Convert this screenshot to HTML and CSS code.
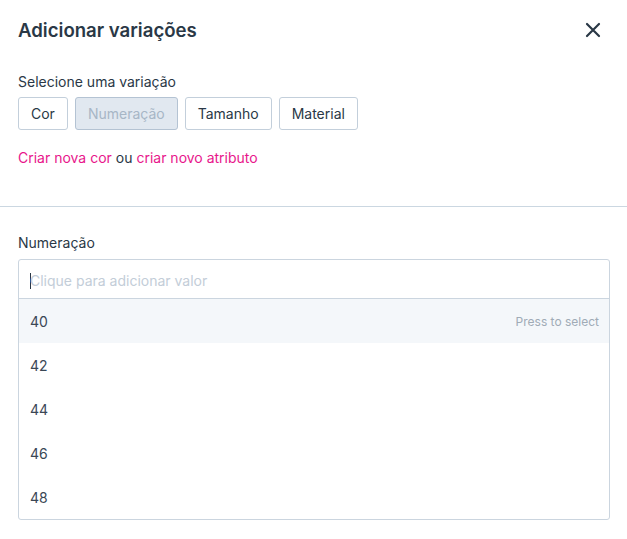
FILE: index.html
```html
<!DOCTYPE html>
<html lang="pt-BR">
<head>
  <meta charset="UTF-8">
  <meta name="viewport" content="width=device-width, initial-scale=1.0">
  <title>Adicionar variações</title>
  <link rel="stylesheet" href="styles.css">
</head>
<body>

  <div class="modal">
    <div class="modal-header">
      <h1>Adicionar variações</h1>
      <button class="close-btn" aria-label="Fechar">
        <svg width="16" height="16" viewBox="0 0 16 16">
          <path d="M2 2 L14 14 M14 2 L2 14" stroke="#2a3846" stroke-width="2.2" stroke-linecap="round"/>
        </svg>
      </button>
    </div>

    <div class="section">
      <p class="label">Selecione uma variação</p>
      <div class="chips">
        <button class="chip">Cor</button>
        <button class="chip chip-active">Numeração</button>
        <button class="chip">Tamanho</button>
        <button class="chip">Material</button>
      </div>
      <p class="links"><a href="#">Criar nova cor</a> ou <a href="#">criar novo atributo</a></p>
    </div>

    <hr class="divider">

    <div class="section">
      <p class="label">Numeração</p>
      <div class="select-box">
        <div class="select-input"><span class="caret"></span>Clique para adicionar valor</div>
        <ul class="options">
          <li class="option option-hover">40 <span class="hint">Press to select</span></li>
          <li class="option">42</li>
          <li class="option">44</li>
          <li class="option">46</li>
          <li class="option">48</li>
        </ul>
      </div>
    </div>
  </div>

</body>
</html>
```

FILE: styles.css
```css
body {
  margin: 0;
  background: white;
  color: #2a3846;
  font-family: Inter, "Noto Sans", sans-serif;
  font-size: 14px;
}

.modal {
  width: 627px;
}

.modal-header {
  display: flex;
  justify-content: space-between;
  align-items: center;
  padding: 18px 18px 0 18px;
  height: 24px;
}

h1 {
  margin: 0;
  font-size: 18.6px;
  font-weight: 600;
  line-height: 24px;
  color: #2a3846;
}

.close-btn {
  background: none;
  border: none;
  padding: 0;
  margin-right: 8px;
  display: flex;
  cursor: pointer;
}

.section {
  padding: 0 18px;
}

.label {
  margin: 0;
  line-height: 20px;
  color: #2a3846;
}

.modal-header + .section {
  padding-top: 30px;
}

.chips {
  display: flex;
  gap: 7px;
  margin-top: 5px;
}

.chip {
  height: 33px;
  padding: 0 12px;
  font-family: inherit;
  font-size: 14px;
  color: #2a3846;
  background: white;
  border: 1px solid #c3cfdb;
  border-radius: 3px;
  cursor: pointer;
}

.chip-active {
  background: #e1e8f0;
  border-color: #b4c3d3;
  color: #a7b6c6;
}

.links {
  margin: 18px 0 0;
  line-height: 20px;
  color: #2a3846;
}

.links a {
  color: #e8168b;
  text-decoration: none;
}

.divider {
  border: none;
  border-top: 1px solid #cbd7e1;
  margin: 38px 0 26px;
}

.select-box {
  margin-top: 6px;
  border: 1px solid #cbd5df;
  border-radius: 3px;
  width: 590px;
}

.select-input {
  height: 35px;
  line-height: 35px;
  padding: 3px 0 0 11px;
  color: #c3cdd8;
  border-bottom: 1px solid #cbd5df;
}

.caret {
  display: inline-block;
  width: 1px;
  height: 16px;
  background: #2a3846;
  vertical-align: -3px;
  margin-right: -1px;
}

.options {
  list-style: none;
  margin: 0;
  padding: 0;
}

.option {
  display: flex;
  justify-content: space-between;
  align-items: center;
  height: 44px;
  padding: 0 10px 0 11px;
  color: #3a4755;
}

.option-hover {
  background: #f4f7fa;
}

.hint {
  font-size: 12px;
  color: #a0abb6;
}
```
